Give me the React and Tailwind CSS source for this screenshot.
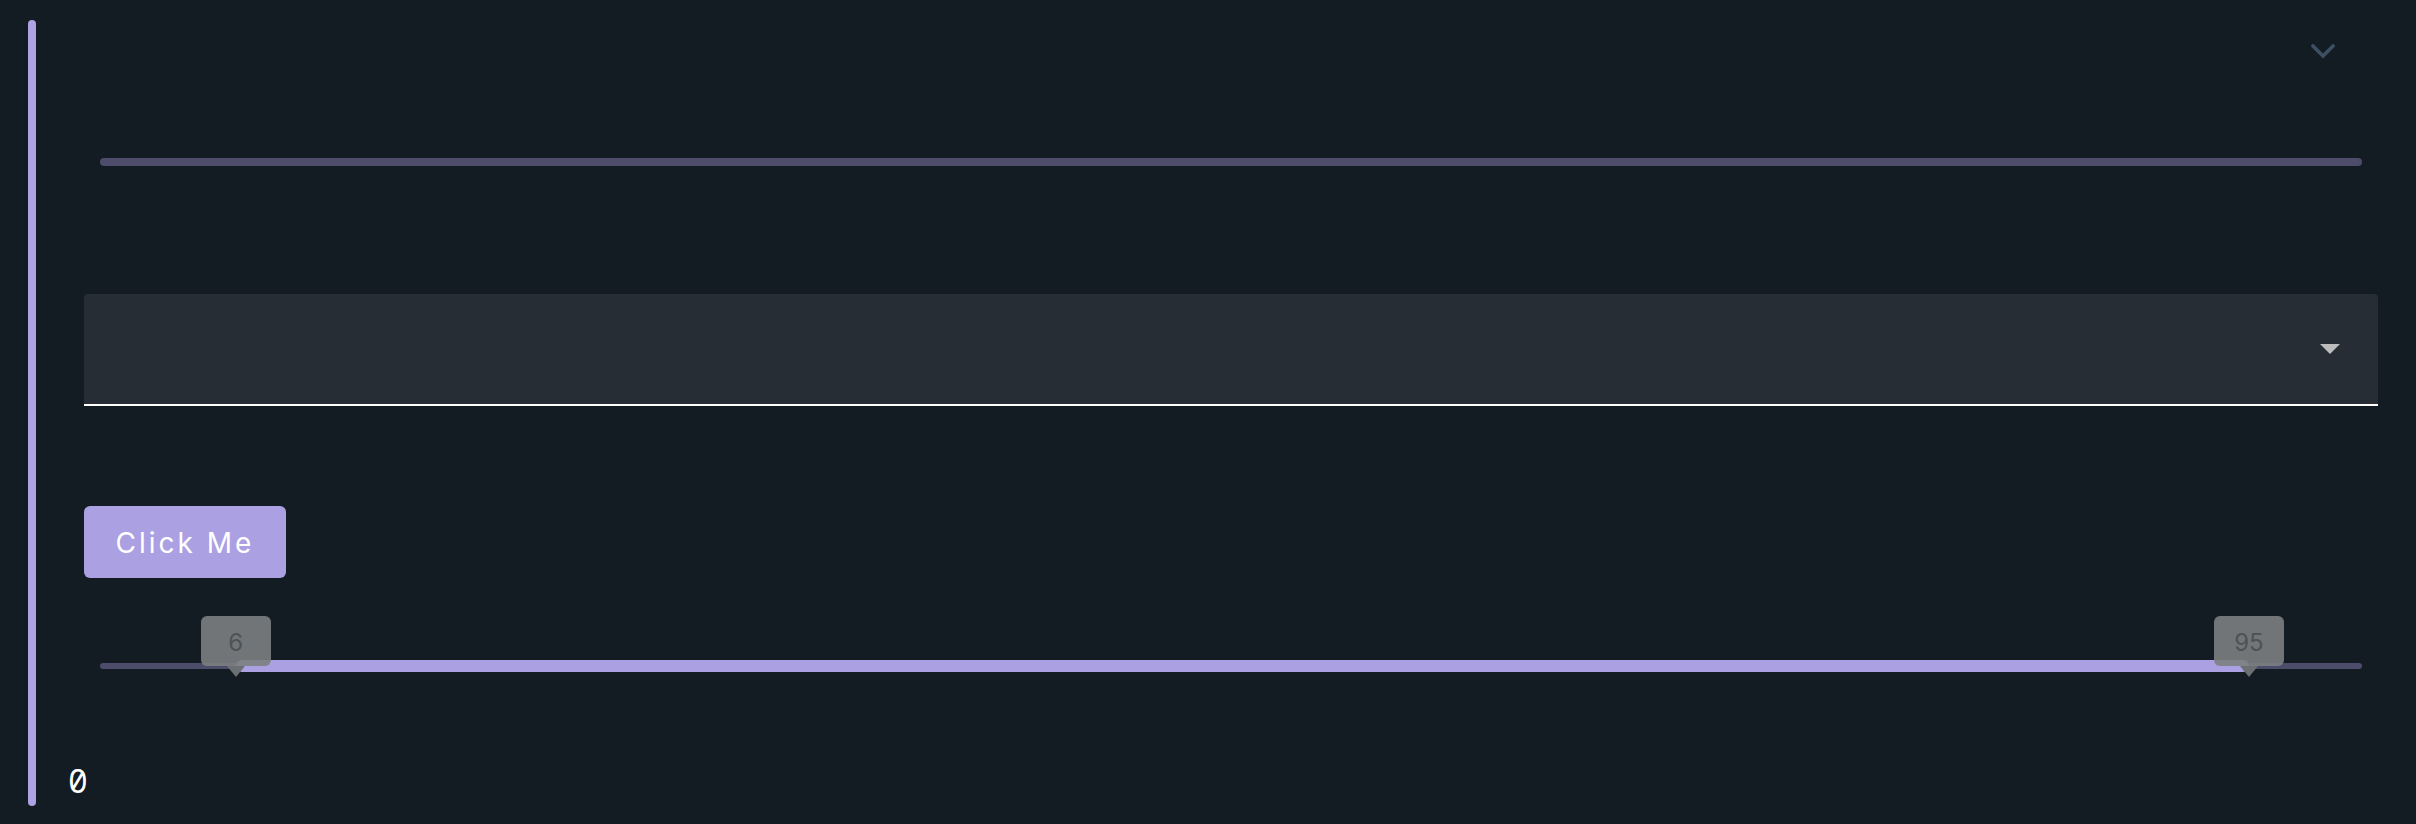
import React from 'react';

const TRACK_MIN = 0;
const TRACK_MAX = 100;

function RangeTip({ value }) {
  const pct = ((value - TRACK_MIN) / (TRACK_MAX - TRACK_MIN)) * 100;
  return (
    <div className="absolute top-0 w-[70px] -ml-[35px] z-10" style={{ left: `${pct}%` }}>
      <div className="h-[50px] pt-[3px] rounded-[6px] bg-[#7c7f81]/90 flex items-center justify-center text-[24px] text-[#4f5254] font-['Inter',sans-serif]">
        {value}
      </div>
      <div className="mx-auto w-0 h-0 border-l-[9px] border-r-[9px] border-t-[11px] border-l-transparent border-r-transparent border-t-[#6d7072]" />
    </div>
  );
}

export default function App() {
  const low = 6;
  const high = 95;
  const lowPct = ((low - TRACK_MIN) / (TRACK_MAX - TRACK_MIN)) * 100;
  const highPct = ((high - TRACK_MIN) / (TRACK_MAX - TRACK_MIN)) * 100;

  return (
    <div className="w-[2416px] h-[824px] bg-[#131c22] flex pl-[28px] pt-[20px] overflow-hidden">
      {/* accent rail */}
      <div className="w-2 h-[786px] rounded-full bg-[#ada2e3] shrink-0" />

      <div className="flex-1 flex flex-col">
        <div className="ml-[48px] mr-[38px] flex flex-col">
          {/* collapse toggle */}
          <div className="h-[15px] mt-[24px] flex justify-end pr-[43px]">
            <svg width="24" height="15" viewBox="0 0 24 15" fill="none">
              <polyline points="2,2 12,12 22,2" stroke="#3d4f63" strokeWidth="3.5" strokeLinecap="square" />
            </svg>
          </div>

          {/* empty progress track */}
          <div className="mt-[99px] mx-4 h-2 rounded-full bg-[#4d4d6b]" />

          {/* select field */}
          <div className="mt-[128px] h-[112px] rounded-t-[4px] bg-[#262d35] border-b-2 border-white flex items-center justify-end pr-[38px]">
            <div className="w-0 h-0 border-l-[10px] border-r-[10px] border-t-[10px] border-l-transparent border-r-transparent border-t-[#bdbdbd]" />
          </div>

          {/* button */}
          <button className="mt-[100px] w-[202px] h-[72px] pt-[2px] rounded-[6px] bg-[#aba0e2] text-white text-[28px] tracking-[3px] font-['Inter',sans-serif] flex items-center justify-center">
            Click Me
          </button>

          {/* range slider */}
          <div className="mt-[38px] mx-4 relative h-[62px]">
            <div className="absolute left-0 right-0 top-[47px] h-[6px] rounded-full bg-[#4d4d6b]" />
            <div
              className="absolute top-[44px] h-[12px] rounded-full bg-[#aba0e2]"
              style={{ left: `${lowPct}%`, width: `${highPct - lowPct}%` }}
            />
            <RangeTip value={low} />
            <RangeTip value={high} />
          </div>
        </div>

        <div className="mt-[86px] ml-[32px] text-[33px] leading-none text-white font-['Noto_Sans_Mono',monospace]">
          0
        </div>
      </div>
    </div>
  );
}
